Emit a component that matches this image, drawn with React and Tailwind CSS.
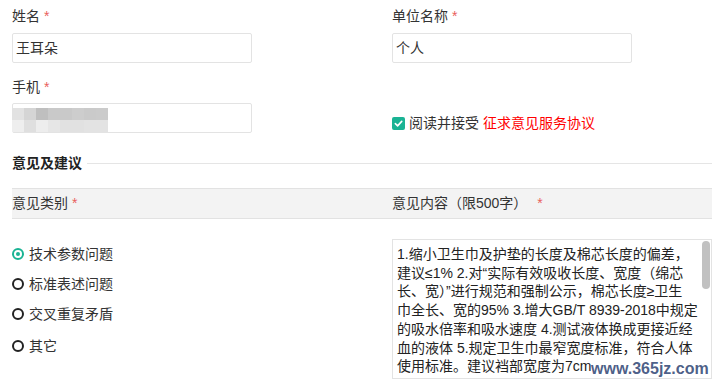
import React from "react";

const font = { fontFamily: '"Liberation Sans", "Noto Sans CJK SC", sans-serif' };

const blurTop = ["#e2e2e2", "#d5d5d5", "#bfbfbf", "#c9c9c9", "#c9c9c9", "#cdcdcd", "#cacaca", "#cbcbcb"];
const blurBottom = ["#eeeeee", "#dfdfdf", "#ededed", "#e6e6e6", "#e1e1e1", "#e1e1e1", "#e3e3e3", "#e3e3e3"];

function Label({ children }) {
  return (
    <div className="h-5 leading-5 text-[14px] text-[#333]">
      {children} <span className="text-[#e9605c]">*</span>
    </div>
  );
}

function Radio({ checked, label }) {
  return (
    <div className="flex items-center h-5 gap-[5px] text-[14px] text-[#333]">
      {checked ? (
        <span className="w-3 h-3 rounded-full border-2 border-[#1ab394] flex items-center justify-center">
          <span className="w-1 h-1 rounded-full bg-[#1ab394]" />
        </span>
      ) : (
        <span className="w-3 h-3 rounded-full border-2 border-[#222]" />
      )}
      <span>{label}</span>
    </div>
  );
}

const lines = [
  "1.缩小卫生巾及护垫的长度及棉芯长度的偏差，",
  "建议≤1% 2.对“实际有效吸收长度、宽度（绵芯",
  "长、宽）”进行规范和强制公示，棉芯长度≥卫生",
  "巾全长、宽的95% 3.增大GB/T 8939-2018中规定",
  "的吸水倍率和吸水速度 4.测试液体换成更接近经",
  "血的液体 5.规定卫生巾最窄宽度标准，符合人体",
  "使用标准。建议裆部宽度为7cm",
];

export default function App() {
  return (
    <div className="relative w-[712px] h-[381px] overflow-hidden bg-white" style={font}>
      <div className="grid grid-cols-[380px_1fr] pl-3 pt-[6px]">
        <div className="flex flex-col">
          <Label>姓名</Label>
          <div className="mt-[7px] w-[240px] h-[30px] border border-[#e3e3e3] rounded-[2px] px-[3px] flex items-center text-[14px] text-[#333]">
            王耳朵
          </div>
          <div className="mt-[14px]">
            <Label>手机</Label>
          </div>
          <div className="relative mt-[6px] w-[240px] h-[30px] border border-[#e3e3e3] rounded-[2px]">
            <div className="absolute left-[-1px] top-[4px] flex flex-col">
              <div className="flex">
                {blurTop.map((c, i) => (
                  <div key={i} className="w-3 h-3" style={{ background: c }} />
                ))}
              </div>
              <div className="flex">
                {blurBottom.map((c, i) => (
                  <div key={i} className="w-3 h-3" style={{ background: c }} />
                ))}
              </div>
            </div>
          </div>
        </div>
        <div className="flex flex-col">
          <Label>单位名称</Label>
          <div className="mt-[7px] w-[240px] h-[30px] border border-[#e3e3e3] rounded-[2px] px-[3px] flex items-center text-[14px] text-[#333]">
            个人
          </div>
          <div className="mt-[50px] h-5 flex items-center text-[14px]">
            <span className="w-[13px] h-[13px] rounded-[2px] bg-[#1ab394] flex items-center justify-center mr-[4px]">
              <svg width="9" height="9" viewBox="0 0 10 10">
                <path d="M1.5 5.2 L4 7.6 L8.6 2.6" fill="none" stroke="white" strokeWidth="1.8" strokeLinecap="round" strokeLinejoin="round" />
              </svg>
            </span>
            <span className="text-[#333]">阅读并接受</span>
            <span className="ml-[4px] text-[#ff0000]">征求意见服务协议</span>
          </div>
        </div>
      </div>

      <div className="mt-[20px] pl-3 flex items-center h-5">
        <span className="text-[14px] font-bold text-[#222]">意见及建议</span>
        <div className="flex-1 h-px bg-[#e5e5e5] ml-[5px]" />
      </div>

      <div className="mt-[15px] ml-3 h-[31px] border-y border-[#e2e2e2] bg-[#f3f3f3] grid grid-cols-[380px_1fr] items-center text-[14px] text-[#333]">
        <div>
          意见类别 <span className="text-[#e9605c]">*</span>
        </div>
        <div>
          意见内容（限500字） <span className="ml-[6px] text-[#e9605c]">*</span>
        </div>
      </div>

      <div className="mt-[20px] pl-3 grid grid-cols-[380px_1fr]">
        <div className="flex flex-col pt-[5px]">
          <Radio checked label="技术参数问题" />
          <div className="mt-[10px]"><Radio label="标准表述问题" /></div>
          <div className="mt-[10px]"><Radio label="交叉重复矛盾" /></div>
          <div className="mt-[12px]"><Radio label="其它" /></div>
        </div>
        <div className="relative h-[140px] border border-[#e3e3e3] overflow-hidden">
          <div className="pl-[4px] pt-[5px] pr-[12px] text-[14px] leading-[18.7px] text-[#222] whitespace-nowrap">
            {lines.map((l, i) => (
              <div key={i}>{l}</div>
            ))}
          </div>
          <div className="absolute right-0 top-0 bottom-0 w-[10px] bg-white">
            <div className="mt-[1px] mx-auto w-[8px] h-[48px] rounded-[4px] bg-[#c1c1c1]" />
          </div>
        </div>
      </div>

      <div
        className="absolute left-[591px] top-[359px] text-[16px] leading-[19px] font-bold text-[#1c3568]/80"
        style={{ fontFamily: '"Liberation Sans", sans-serif' }}
      >
        www.365jz.com
      </div>
    </div>
  );
}
